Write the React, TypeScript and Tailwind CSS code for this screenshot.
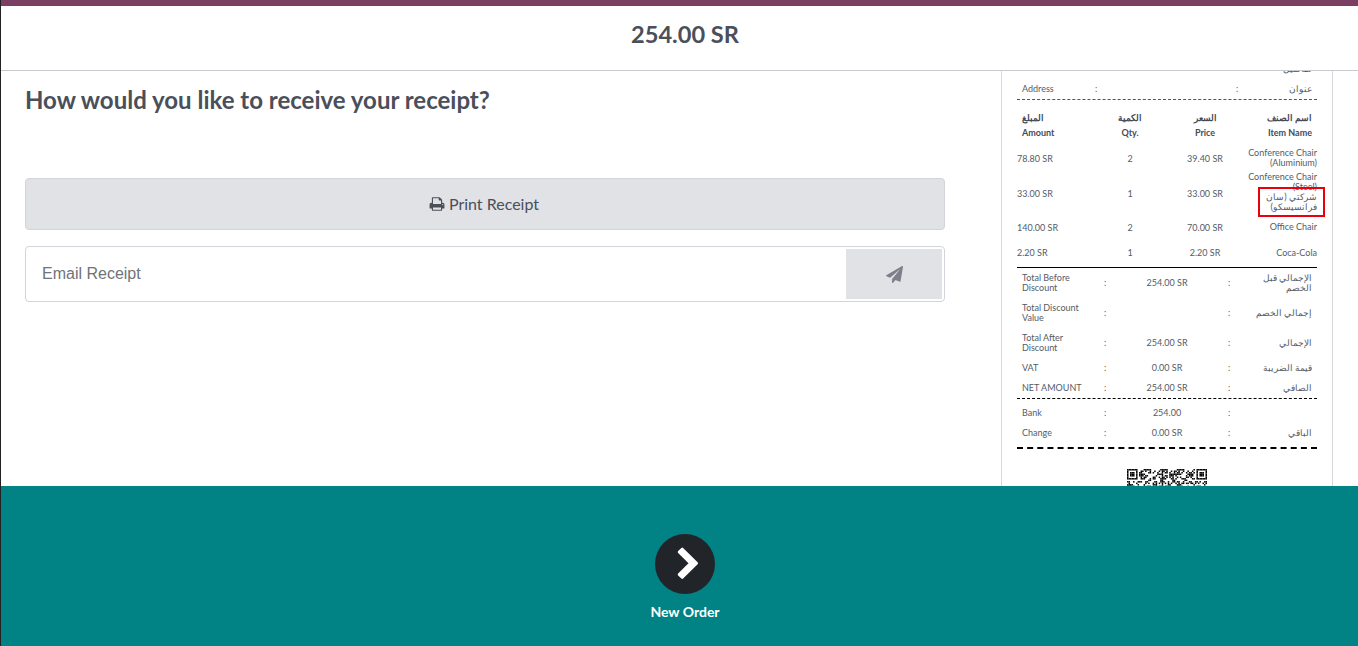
import React from 'react';

const ITEMS = [
  { amount: '78.80 SR', qty: '2', price: '39.40 SR', name: ['Conference Chair', '(Aluminium)'], marked: [], h: 'h-[24px]', nameClass: 'mb-[2px]' },
  { amount: '33.00 SR', qty: '1', price: '33.00 SR', name: ['Conference Chair', '(Steel)'], marked: ['شركتي (سان', 'فرانسيسكو)'], h: 'h-[46px]', nameClass: 'mb-[4px]' },
  { amount: '140.00 SR', qty: '2', price: '70.00 SR', name: ['Office Chair'], marked: [], h: 'h-[22px]', nameClass: 'mb-[2px]' },
  { amount: '2.20 SR', qty: '1', price: '2.20 SR', name: ['Coca-Cola'], marked: [], h: 'h-[28px]', nameClass: '' },
];

const TOTALS = [
  { label: 'Total Before Discount', value: '254.00 SR', ar: 'الإجمالي قبل الخصم', h: 'h-[30px]' },
  { label: 'Total Discount Value', value: '', ar: 'إجمالي الخصم', h: 'h-[30px]' },
  { label: 'Total After Discount', value: '254.00 SR', ar: 'الإجمالي', h: 'h-[30px]' },
  { label: 'VAT', value: '0.00 SR', ar: 'قيمة الضريبة', h: 'h-[19px]' },
  { label: 'NET AMOUNT', value: '254.00 SR', ar: 'الصافي', h: 'h-[21px]' },
];

const PAYMENTS = [
  { label: 'Bank', value: '254.00', ar: '' },
  { label: 'Change', value: '0.00 SR', ar: 'الباقي' },
];

const QR_SIZE = 53;

// stand-in QR pattern, only the top rows are ever visible
function qrCell(x: number, y: number) {
  const inFinder = (ox: number) => x >= ox && x < ox + 7 && y < 7;
  if (inFinder(0) || inFinder(QR_SIZE - 7)) {
    const ox = inFinder(0) ? 0 : QR_SIZE - 7;
    const dx = x - ox;
    const ring = dx === 0 || dx === 6 || y === 0 || y === 6;
    const core = dx >= 2 && dx <= 4 && y >= 2 && y <= 4;
    return ring || core;
  }
  if (y < 8 && (x < 8 || x >= QR_SIZE - 8)) return false;
  return ((x * 7 + y * 13 + x * y * 3 + ((x ^ y) * 5)) % 11) < 5;
}

function QrCode() {
  const cells: React.ReactNode[] = [];
  for (let y = 0; y < 14; y++) {
    for (let x = 0; x < QR_SIZE; x++) {
      if (qrCell(x, y)) cells.push(<rect key={`${x}-${y}`} x={x} y={y} width="1" height="1" fill="#000" />);
    }
  }
  return (
    <svg width="80" height="80" viewBox={`0 0 ${QR_SIZE} ${QR_SIZE}`} className="mx-auto">
      {cells}
    </svg>
  );
}

function TotalRow({ label, value, ar, h }: { label: string; value: string; ar: string; h: string }) {
  return (
    <div className={`grid grid-cols-[83px_10px_114px_10px_83px] items-center leading-[10px] ${h}`}>
      <div className="pl-[5px]">{label}</div>
      <div className="text-center">:</div>
      <div className="text-center">{value}</div>
      <div className="text-center">:</div>
      <div dir="rtl" className="pr-[5px] pl-[20px]">{ar}</div>
    </div>
  );
}

function Receipt() {
  return (
    <div className="w-[332px] h-full overflow-hidden border-x border-[#d8d8dc] px-[15px] text-[#555b66] text-[9px] font-['Lato','Noto_Sans',sans-serif]">
      <div dir="rtl" className="h-[8px] leading-[0px] pr-[5px] -mt-[2px]">تفاصيل</div>

      <div className="grid grid-cols-[69px_10px_131px_10px_70px] items-center h-[20px] mt-[2px] px-[5px]">
        <div>Address</div>
        <div className="text-center">:</div>
        <div />
        <div className="text-center">:</div>
        <div dir="rtl">عنوان</div>
      </div>

      <div className="border-t border-dashed border-[#555]" />

      <div className="grid grid-cols-[78px_70px_80px_72px] font-bold text-[#444b57] mt-[11px] h-[36px]">
        <div className="pl-[5px]">
          <div className="h-[15px]">المبلغ</div>
          <div>Amount</div>
        </div>
        <div className="text-center">
          <div className="h-[15px]">الكمية</div>
          <div>Qty.</div>
        </div>
        <div className="text-center">
          <div className="h-[15px]">السعر</div>
          <div>Price</div>
        </div>
        <div className="text-right pr-[5px] whitespace-nowrap">
          <div className="h-[15px]">اسم الصنف</div>
          <div>Item Name</div>
        </div>
      </div>

      {ITEMS.map((item) => (
        <div key={item.amount} className={`grid grid-cols-[78px_70px_80px_72px] items-center ${item.h}`}>
          <div>{item.amount}</div>
          <div className="text-center">{item.qty}</div>
          <div className="text-center">{item.price}</div>
          <div className={`text-right leading-[10px] whitespace-nowrap ${item.nameClass}`}>
            {item.name.map((line) => (
              <div key={line}>{line}</div>
            ))}
            {item.marked.length > 0 && (
              <div className="relative" dir="rtl">
                {item.marked.map((line) => (
                  <div key={line}>{line}</div>
                ))}
                <div className="absolute -top-[5px] -bottom-[5px] -right-[8px] w-[67px] border-2 border-[#e8000d]" />
              </div>
            )}
          </div>
        </div>
      ))}

      <div className="border-t border-black" />

      {TOTALS.map((row) => (
        <TotalRow key={row.label} {...row} />
      ))}

      <div className="border-t border-dashed border-black" />

      <div className="pt-[4px]">
        {PAYMENTS.map((row) => (
          <TotalRow key={row.label} {...row} h="h-[20px]" />
        ))}
      </div>

      <div className="border-t-2 border-dashed border-black mt-[4px]" />

      <div className="mt-[20px]">
        <QrCode />
      </div>
    </div>
  );
}

export default function App() {
  return (
    <div className="w-[1358px] h-[646px] flex flex-col overflow-hidden bg-white border-l border-[#222] font-['Lato',sans-serif]">
      <div className="h-[6px] shrink-0 bg-[#7b3f63]" />

      <div className="h-[65px] shrink-0 flex items-center justify-center border-b border-[#c9c9d0] pl-[11px] pb-[6px] text-[23.6px] font-bold text-[#4a4f59]">
        254.00 SR
      </div>

      <div className="flex-1 min-h-0 flex">
        <div className="w-[1000px] shrink-0 pl-[24px] pr-[56px]">
          <h1 className="text-[24px] font-bold text-[#4a4f59] leading-[29px] mt-[14px]">
            How would you like to receive your receipt?
          </h1>

          <button className="mt-[64px] w-full h-[52px] flex items-center justify-center gap-[4px] pr-[2px] rounded bg-[#e0e2e6] border border-[#d3d4d9] text-[16px] text-[#4a4f59]">
            <svg viewBox="0 0 1792 1792" className="w-[16px] h-[16px]" fill="currentColor">
              <path d="M448 1536h896v-256h-896v256zm0-640h896v-384h-160q-40 0-68-28t-28-68v-160h-640v640zm1152 64q0-26-19-45t-45-19-45 19-19 45 19 45 45 19 45-19 19-45zm128 0v416q0 13-9.5 22.5t-22.5 9.5h-224v160q0 40-28 68t-68 28h-960q-40 0-68-28t-28-68v-160h-224q-13 0-22.5-9.5t-9.5-22.5v-416q0-79 56.5-135.5t135.5-56.5h64v-544q0-40 28-68t68-28h672q40 0 88 20t76 48l152 152q28 28 48 76t20 88v256h64q79 0 135.5 56.5t56.5 135.5z" />
            </svg>
            Print Receipt
          </button>

          <div className="mt-[16px] h-[56px] flex items-center justify-between rounded border border-[#d3d4d9] pl-[16px] pr-[2px]">
            <span className="text-[16px] text-[#6f737a] font-['Liberation_Sans',sans-serif]">Email Receipt</span>
            <div className="w-[96px] h-[50px] bg-[#e0e2e6] flex items-center justify-center">
              <svg viewBox="0 0 1792 1792" className="w-[17px] h-[17px] text-[#7e8089]" fill="currentColor">
                <path d="M1764 11q33 24 27 64l-256 1536q-5 29-32 45-14 8-31 8-11 0-24-5l-453-185-242 295q-18 23-49 23-13 0-22-4-19-7-30.5-23.5t-11.5-36.5v-349l864-1059-1069 925-395-162q-37-14-40-55-2-40 32-59l1664-960q15-9 32-9 20 0 36 11z" />
              </svg>
            </div>
          </div>
        </div>

        <Receipt />
      </div>

      <div className="h-[160px] shrink-0 bg-[#018285] flex flex-col items-center pl-[11px] pt-[48px]">
        <div className="w-[60px] h-[60px] rounded-full bg-[#212529] flex items-center justify-center">
          <svg viewBox="0 0 1792 1792" className="w-[35px] h-[35px] ml-[6px] text-white" fill="currentColor">
            <path d="M1363 877l-742 742q-19 19-45 19t-45-19l-166-166q-19-19-19-45t19-45l531-531-531-531q-19-19-19-45t19-45l166-166q19-19 45-19t45 19l742 742q19 19 19 45t-19 45z" />
          </svg>
        </div>
        <div className="mt-[9px] text-[14px] font-bold text-white leading-[17px]">New Order</div>
      </div>
    </div>
  );
}
